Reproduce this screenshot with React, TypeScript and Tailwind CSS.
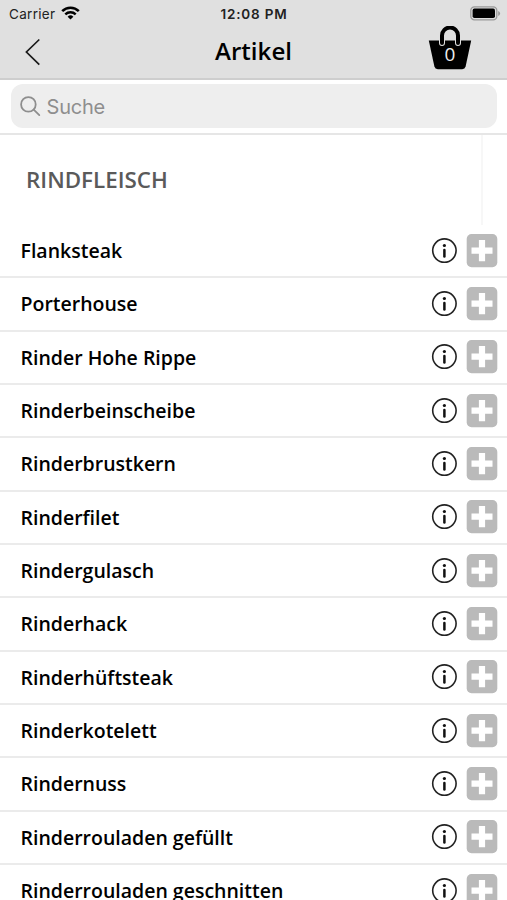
const articles = [
    'Flanksteak',
    'Porterhouse',
    'Rinder Hohe Rippe',
    'Rinderbeinscheibe',
    'Rinderbrustkern',
    'Rinderfilet',
    'Rindergulasch',
    'Rinderhack',
    'Rinderhüftsteak',
    'Rinderkotelett',
    'Rindernuss',
    'Rinderrouladen gefüllt',
    'Rinderrouladen geschnitten',
];

function StatusBar() {
    return (
        <div className="flex h-7 items-center pr-[6px] pl-[9px] font-['Inter',sans-serif] text-[13px] text-[#222]">
            <div className="flex flex-1 items-center gap-[6px]">
                <span className="text-[13.5px] tracking-[0.3px]">Carrier</span>
                <svg className="-mt-[3px] h-[14px] w-[19px]" viewBox="0 0 19 14">
                    <path d="M1.2 5.2a11.8 11.8 0 0 1 16.6 0" fill="none" stroke="#000" strokeWidth="2.6" />
                    <path d="M4.3 8.4a7.4 7.4 0 0 1 10.4 0" fill="none" stroke="#000" strokeWidth="2.4" />
                    <path d="M9.5 13.6 6.6 10.7a4.1 4.1 0 0 1 5.8 0z" />
                </svg>
            </div>
            <span className="-ml-[2px] text-[13.5px] font-semibold tracking-[0.8px] whitespace-nowrap">12:08 PM</span>
            <div className="flex flex-1 justify-end">
                <svg className="-mt-[2px] h-[15px] w-[31px]" viewBox="0 0 31 15">
                    <rect x="0.8" y="0.8" width="26" height="13" rx="3.6" fill="#ddd" stroke="#999" strokeWidth="1.3" />
                    <rect x="2.6" y="2.6" width="22.4" height="9.4" rx="1.8" />
                    <path d="M28.2 5v5a2.6 2.6 0 0 0 0-5z" fill="#999" />
                </svg>
            </div>
        </div>
    );
}

function Basket({ count }: { count: number }) {
    return (
        <button className="relative block h-[45px] w-[44px]">
            <svg className="h-[45px] w-[44px]" viewBox="0 0 44 45">
                <path d="M0.8 14.5h42.4L37.6 40.6a3.6 3.6 0 0 1-3.4 2.7H9.8a3.6 3.6 0 0 1-3.4-2.7z" />
                <path d="M14 17V9.5a8 8 0 0 1 16 0V17" fill="none" stroke="#e0e0e0" strokeWidth="6" strokeLinecap="round" />
                <path d="M14 17V9.5a8 8 0 0 1 16 0V17" fill="none" stroke="#000" strokeWidth="4" strokeLinecap="round" />
            </svg>
            <span className="absolute top-[16px] left-0 w-full text-center text-[19px] leading-6 text-[#eee]">
                {count}
            </span>
        </button>
    );
}

function InfoIcon() {
    return (
        <svg className="h-[26px] w-[26px]" viewBox="0 0 26 26">
            <circle cx="13.4" cy="12.6" r="11.7" fill="none" stroke="#222" strokeWidth="1.6" />
            <circle cx="13.4" cy="7.5" r="1.6" fill="#111" />
            <path d="M13.4 12v6.6" stroke="#111" strokeWidth="2.5" strokeLinecap="round" />
        </svg>
    );
}

function PlusIcon() {
    return (
        <svg className="h-[34px] w-[32px]" viewBox="0 0 32 34">
            <rect x="0.7" y="0" width="30.6" height="33.2" rx="4.8" fill="#bababa" />
            <path d="M16 6v21.2M5.5 16.6h21" stroke="#fff" strokeWidth="6.2" />
        </svg>
    );
}

function ArticleRow({ name }: { name: string }) {
    return (
        <li className="flex h-[53.35px] items-center border-b-2 border-[#ebebeb] pr-[9px] pl-[20.5px]">
            <span className="grow text-[19.5px] font-semibold whitespace-nowrap">{name}</span>
            <button className="mr-[9px]">
                <InfoIcon />
            </button>
            <button>
                <PlusIcon />
            </button>
        </li>
    );
}

export default function App() {
    return (
        <div className="h-[900px] w-full overflow-hidden bg-white font-['Open_Sans',sans-serif] text-black">
            <header className="h-20 border-b-2 border-[#cecece] bg-[#e0e0e0]">
                <StatusBar />
                <div className="-mt-1 flex h-[48px] items-center pr-[35px] pl-[24px]">
                    <div className="flex-1">
                        <button className="block">
                            <svg className="mt-[7px] h-7 w-[18px]" viewBox="0 0 18 28" fill="none" stroke="#1a1a1a" strokeWidth="1.7">
                                <path d="M15.3 1.5 2.4 14l12.9 12.7" />
                            </svg>
                        </button>
                    </div>
                    <h1 className="ml-[11px] pt-[6px] text-[24.1px] font-semibold">Artikel</h1>
                    <div className="flex flex-1 justify-end">
                        <Basket count={0} />
                    </div>
                </div>
            </header>

            <div className="h-[55px] border-b-2 border-[#e6e6e6] px-[10.5px] pt-1">
                <div className="flex h-11 items-center gap-[6px] rounded-[12px] bg-[#eee] pl-[9px] text-[#8e8e8e]">
                    <svg className="h-[21px] w-[21px]" viewBox="0 0 21 21" fill="none" stroke="currentColor" strokeWidth="1.8">
                        <circle cx="8.4" cy="8.4" r="7.3" />
                        <path d="m13.7 13.7 5.6 5.4" strokeLinecap="round" />
                    </svg>
                    <span className="pt-px font-['Inter',sans-serif] text-[20px] tracking-[-0.2px]">Suche</span>
                </div>
            </div>

            <div className="mr-[24px] flex h-[90px] items-center border-r-2 border-[#f7f7f7] pl-[26px]">
                <h2 className="text-[22.4px] font-semibold text-[#5a5a5a]">RINDFLEISCH</h2>
            </div>

            <ul>
                {articles.map((name) => (
                    <ArticleRow key={name} name={name} />
                ))}
            </ul>
        </div>
    );
}
